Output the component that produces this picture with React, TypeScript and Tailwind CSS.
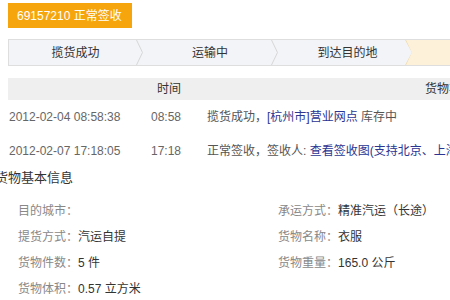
function Chevron({ stroke = "#d6d6d6" }: { stroke?: string }) {
  return (
    <svg width="7" height="25" viewBox="0 0 7 25" className="shrink-0 block" aria-hidden="true">
      <polyline points="0.5,0 6.5,12.5 0.5,25" fill="none" stroke={stroke} strokeWidth="1" />
    </svg>
  );
}

const info: [string, string][] = [
  ["目的城市", ""],
  ["承运方式", "精准汽运（长途）"],
  ["提货方式", "汽运自提"],
  ["货物名称", "衣服"],
  ["货物件数", "5 件"],
  ["货物重量", "165.0 公斤"],
  ["货物体积", "0.57 立方米"],
];

export default function App() {
  return (
    <div className="w-[450px] h-[300px] overflow-hidden bg-white text-[12px] font-[family-name:'Liberation_Sans','Noto_Sans_CJK_SC',sans-serif]">
      <div className="pl-[8px]">
        {/* status badge */}
        <div className="mt-[3px] inline-flex items-center h-[25px] pl-[9px] pr-[10px] bg-[#f6a60c] text-white text-[12px]">
          69157210 正常签收
        </div>

        {/* progress steps */}
        <div className="mt-[11px] flex h-[27px] w-[460px] border border-[#dedede] border-r-0 bg-[#f3f4f7] text-[#333]">
          <div className="flex shrink-0 w-[134px]">
            <div className="flex-1 flex items-center justify-center pl-[6px]">揽货成功</div>
            <Chevron />
          </div>
          <div className="flex shrink-0 w-[135px]">
            <div className="flex-1 flex items-center justify-center pl-[6px]">运输中</div>
            <Chevron />
          </div>
          <div className="flex shrink-0 w-[127px]">
            <div className="flex-1 flex items-center justify-center pl-[12px]">到达目的地</div>
          </div>
          <div className="flex-1 flex bg-[#fdf1da] [clip-path:polygon(0_0,100%_0,100%_100%,0_100%,7px_50%)]">
            <Chevron stroke="#ecd9b0" />
          </div>
        </div>

        {/* tracking table */}
        <div className="mt-[12px] flex items-center h-[22px] bg-[#efefef] text-[#333] whitespace-nowrap">
          <div className="shrink-0 w-[149px]" />
          <div className="shrink-0 w-[56px]">时间</div>
          <div className="shrink-0 pl-[212px]">货物状态</div>
        </div>
        <div className="flex items-center h-[34px] text-[#666] whitespace-nowrap">
          <div className="shrink-0 w-[143px] pl-px">2012-02-04 08:58:38</div>
          <div className="shrink-0 w-[56px]">08:58</div>
          <div className="shrink-0 text-[#555]">
            揽货成功，<span className="text-[#2b3592]">[杭州市]营业网点</span> 库存中
          </div>
        </div>
        <div className="flex items-center h-[34px] text-[#666] whitespace-nowrap">
          <div className="shrink-0 w-[143px] pl-px">2012-02-07 17:18:05</div>
          <div className="shrink-0 w-[56px]">17:18</div>
          <div className="shrink-0 text-[#555]">
            正常签收，签收人: <span className="text-[#2b3592]">查看签收图(支持北京、上海、广州)</span>
          </div>
        </div>
      </div>

      {/* basic info */}
      <div className="ml-[-5px] h-[20px] flex items-center text-[13px] text-[#333]">货物基本信息</div>
      <div className="mt-[10px] pl-[18px] grid grid-cols-[260px_1fr]">
        {info.map(([label, value]) => (
          <div key={label} className="h-[26px] flex items-center whitespace-nowrap">
            <span className="text-[#888]">{label}：</span>
            <span className="text-[#333]">{value}</span>
          </div>
        ))}
      </div>
    </div>
  );
}
